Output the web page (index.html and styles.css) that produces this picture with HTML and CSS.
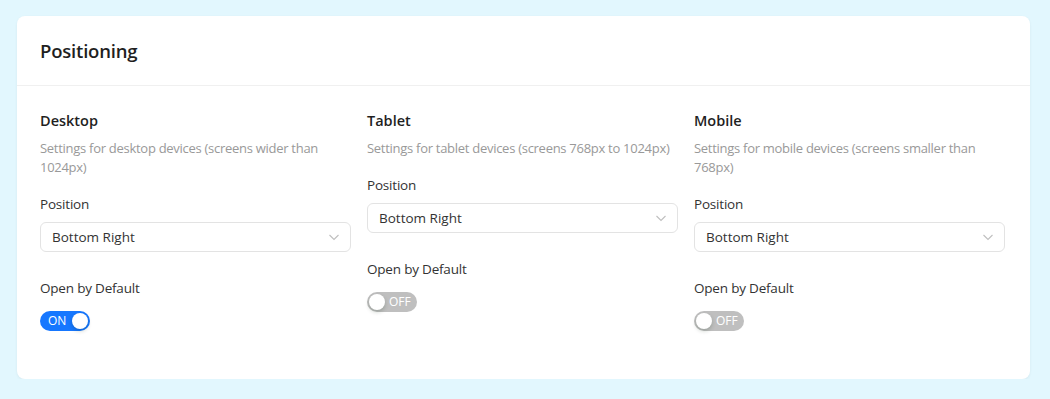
FILE: index.html
```html
<!DOCTYPE html>
<html lang="en">
<head>
    <meta charset="UTF-8">
    <meta name="viewport" content="width=device-width, initial-scale=1.0">
    <title>Positioning</title>
    <link rel="stylesheet" href="styles.css">
</head>
<body>
    <div class="card">
        <div class="card-header">
            <h2>Positioning</h2>
        </div>
        <div class="card-body">
            <div class="device">
                <h3>Desktop</h3>
                <p class="desc">Settings for desktop devices (screens wider than 1024px)</p>
                <label class="field-label">Position</label>
                <div class="select">
                    <span>Bottom Right</span>
                    <svg class="chevron" width="12" height="12" viewBox="0 0 12 12"><path d="M1.5 4 L6 8.5 L10.5 4" fill="none" stroke="#bfbfbf" stroke-width="1.1"/></svg>
                </div>
                <label class="field-label">Open by Default</label>
                <button class="switch on" type="button"><span class="switch-text">ON</span><span class="knob"></span></button>
            </div>
            <div class="device">
                <h3>Tablet</h3>
                <p class="desc">Settings for tablet devices (screens 768px to 1024px)</p>
                <label class="field-label">Position</label>
                <div class="select">
                    <span>Bottom Right</span>
                    <svg class="chevron" width="12" height="12" viewBox="0 0 12 12"><path d="M1.5 4 L6 8.5 L10.5 4" fill="none" stroke="#bfbfbf" stroke-width="1.1"/></svg>
                </div>
                <label class="field-label">Open by Default</label>
                <button class="switch" type="button"><span class="knob"></span><span class="switch-text">OFF</span></button>
            </div>
            <div class="device">
                <h3>Mobile</h3>
                <p class="desc">Settings for mobile devices (screens smaller than 768px)</p>
                <label class="field-label">Position</label>
                <div class="select">
                    <span>Bottom Right</span>
                    <svg class="chevron" width="12" height="12" viewBox="0 0 12 12"><path d="M1.5 4 L6 8.5 L10.5 4" fill="none" stroke="#bfbfbf" stroke-width="1.1"/></svg>
                </div>
                <label class="field-label">Open by Default</label>
                <button class="switch" type="button"><span class="knob"></span><span class="switch-text">OFF</span></button>
            </div>
        </div>
    </div>
</body>
</html>
```

FILE: styles.css
```css
body {
    font-family: 'Open Sans', 'Noto Sans', sans-serif;
    margin: 0;
    padding: 16px 20px 0 17px;
    background-color: #e2f7fe;
    color: #333;
}

.card {
    background: #fff;
    border-radius: 8px;
    box-shadow: 0 1px 3px rgba(0, 0, 0, 0.06);
    height: 363px;
    box-sizing: border-box;
}

.card-header {
    height: 70px;
    padding: 0 23px;
    display: flex;
    align-items: center;
    border-bottom: 1px solid #f0f0f0;
    box-sizing: border-box;
}

.card-header h2 {
    margin: 0;
    font-size: 18.5px;
    font-weight: 600;
    color: #1f1f1f;
    letter-spacing: -0.2px;
}

.card-body {
    display: grid;
    grid-template-columns: repeat(3, 1fr);
    column-gap: 16px;
    padding: 24px 25px 0 23px;
}

.device {
    display: flex;
    flex-direction: column;
    align-items: flex-start;
}

.device h3 {
    margin: 0 0 7px;
    font-size: 14.5px;
    line-height: 22px;
    font-weight: 600;
    color: #1f1f1f;
}

.desc {
    margin: 0 0 16px;
    font-size: 13px;
    line-height: 19px;
    color: #999;
    letter-spacing: -0.28px;
}

.field-label {
    font-size: 13.5px;
    line-height: 22px;
    color: #333;
    letter-spacing: -0.2px;
    margin-bottom: 7px;
}

.select {
    width: 100%;
    height: 30px;
    box-sizing: border-box;
    border: 1px solid #e3e3e3;
    border-radius: 6px;
    display: flex;
    align-items: center;
    justify-content: space-between;
    padding: 0 11px;
    font-size: 13.5px;
    color: #333;
    margin-bottom: 25px;
}

.chevron {
    margin-right: -1px;
}

.switch {
    width: 50px;
    height: 20px;
    border: none;
    border-radius: 10px;
    background: #bfbfbf;
    margin-top: 5px;
    padding: 0 2px;
    display: flex;
    align-items: center;
    justify-content: flex-start;
    font-family: inherit;
    cursor: pointer;
}

.switch.on {
    background: #1677ff;
    justify-content: space-between;
}

.switch-text {
    font-size: 12px;
    color: #fff;
    line-height: 20px;
    margin: 0 4px 0 4px;
}

.switch.on .switch-text {
    margin-left: 6px;
}

.knob {
    width: 16px;
    height: 16px;
    border-radius: 50%;
    background: #fff;
    box-shadow: 0 2px 4px rgba(0, 35, 11, 0.2);
    flex-shrink: 0;
}
```
